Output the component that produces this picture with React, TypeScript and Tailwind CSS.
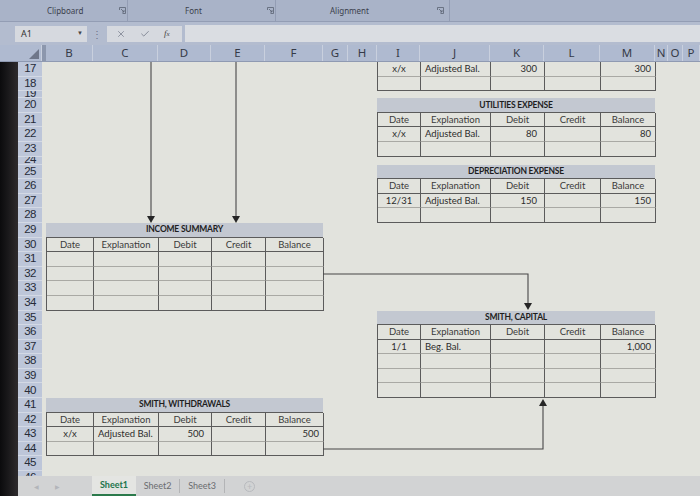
import { X, Check } from "lucide-react";

const COLS = [
  { label: "B", w: "w-[47px]" },
  { label: "C", w: "w-[65px]" },
  { label: "D", w: "w-[53px]" },
  { label: "E", w: "w-[54px]" },
  { label: "F", w: "w-[58px]" },
  { label: "G", w: "w-[25px]" },
  { label: "H", w: "w-[29px]" },
  { label: "I", w: "w-[43px]" },
  { label: "J", w: "w-[70px]" },
  { label: "K", w: "w-[54px]" },
  { label: "L", w: "w-[56px]" },
  { label: "M", w: "w-[55px]" },
  { label: "N", w: "w-[13px]" },
  { label: "O", w: "w-[15px]" },
  { label: "P", w: "flex-1" },
];

// rows 17..46, 19 and 24 are squeezed almost shut
const ROWS = Array.from({ length: 30 }, (_, i) => 17 + i);

function rowHeight(r: number) {
  if (r === 19) return "h-[7px] overflow-hidden";
  if (r === 24) return "h-[8px] overflow-hidden";
  return "h-[14.6px]";
}

const LEFT_COLS = "grid-cols-[47px_65px_53px_54px_58px]";
const RIGHT_COLS = "grid-cols-[43px_70px_54px_56px_55px]";
const HEAD = ["Date", "Explanation", "Debit", "Credit", "Balance"];
const ALIGN = [
  "justify-center",
  "justify-start pl-[4px]",
  "justify-end pr-[7px]",
  "justify-end pr-[7px]",
  "justify-end pr-[4px]",
];
const EMPTY = ["", "", "", "", ""];

type LedgerProps = {
  title?: string;
  rows: string[][];
  cols: string;
  place: string;
  head?: boolean;
};

function Ledger({ title, rows, cols, place, head = true }: LedgerProps) {
  const body = head ? [HEAD, ...rows] : rows;
  return (
    <div className={`${place} flex flex-col`}>
      {title && (
        <div className="h-[14.6px] shrink-0 bg-[#c3c8d1] border-b border-[#5b5b5b] flex items-center justify-center text-[8.5px] font-bold text-[#1e1e1e] tracking-tight">
          {title}
        </div>
      )}
      <div className={`grid ${cols} border-l border-[#5b5b5b]`}>
        {body.map((row, ri) =>
          row.map((cell, ci) => {
            const isHead = head && ri === 0;
            const last = ri === body.length - 1;
            const bottom = isHead || last ? "border-b-[#5b5b5b]" : "border-b-[#a9a9a4]";
            return (
              <div
                key={`${ri}-${ci}`}
                className={`h-[14.6px] flex items-center border-r border-b border-r-[#5b5b5b] ${bottom} text-[9.5px] leading-none whitespace-nowrap ${
                  isHead ? "justify-center text-[#3a3a3a]" : `${ALIGN[ci]} text-[#2c2c2c]`
                }`}
              >
                {cell}
              </div>
            );
          })
        )}
      </div>
    </div>
  );
}

function Launcher() {
  return (
    <svg width="7" height="7" viewBox="0 0 7 7" className="shrink-0">
      <path d="M0.5 3V0.5H6.5V6.5H3.5" stroke="#5b6272" fill="none" strokeWidth="0.8" />
      <path d="M2 2L5 5M5 3V5H3" stroke="#5b6272" fill="none" strokeWidth="0.8" />
    </svg>
  );
}

function Ribbon() {
  return (
    <div className="h-[22px] bg-[#a9b3c8] border-b border-[#939db4] flex items-center text-[8px] text-[#3b404c] font-['Noto_Sans',sans-serif]">
      <div className="w-[128px] h-full flex items-center pl-[47px] border-r border-[#939db4]">
        <span>Clipboard</span>
        <span className="ml-[36px]">
          <Launcher />
        </span>
      </div>
      <div className="w-[148px] h-full flex items-center pl-[57px] border-r border-[#939db4]">
        <span>Font</span>
        <span className="ml-[65px]">
          <Launcher />
        </span>
      </div>
      <div className="w-[174px] h-full flex items-center pl-[54px] border-r border-[#939db4]">
        <span>Alignment</span>
        <span className="ml-[68px]">
          <Launcher />
        </span>
      </div>
      <div className="flex-1" />
    </div>
  );
}

function FormulaBar() {
  return (
    <div className="h-[23px] bg-[#b3bccf] flex items-center font-['Noto_Sans',sans-serif]">
      <div className="ml-[15px] w-[72px] h-[16px] bg-[#d6d9df] flex items-center justify-between pl-[6px] pr-[4px] text-[9px] text-[#333]">
        <span>A1</span>
        <span className="text-[6px] text-[#444]">▼</span>
      </div>
      <div className="w-[20px] flex justify-center text-[10px] leading-none text-[#6b7385]">⋮</div>
      <div className="w-[75px] h-[16px] bg-[#d6d9df] flex items-center pl-[9px] gap-[14px] text-[#6a7080]">
        <X size={10} strokeWidth={1.6} />
        <Check size={10} strokeWidth={1.8} />
        <span className="text-[9px] italic font-['Liberation_Serif',serif] text-[#444]">
          f<span className="text-[7px]">x</span>
        </span>
      </div>
      <div className="ml-[3px] flex-1 h-[17px] bg-[#dadde2]" />
    </div>
  );
}

function ColumnHeaders() {
  return (
    <div className="flex h-[17px] bg-[#afbad0] border-b border-[#8f9ab2] font-['Noto_Sans',sans-serif]">
      <div className="w-[42px] shrink-0 flex items-end justify-end pr-[2px] pb-[2px] border-r border-[#c9d0de]">
        <svg width="10" height="10" viewBox="0 0 10 10">
          <polygon points="10,0 10,10 0,10" fill="#6e7689" />
        </svg>
      </div>
      <div className="w-[4px] shrink-0 bg-[#8c97ad]" />
      {COLS.map((c) => (
        <div
          key={c.label}
          className={`${c.w} shrink-0 border-r border-[#c9d0de] flex items-center justify-center text-[11.5px] leading-none text-[#363b48]`}
        >
          {c.label}
        </div>
      ))}
    </div>
  );
}

function RowHeaders() {
  return (
    <div className="w-[24px] shrink-0 flex flex-col bg-[#bdc6d9] font-['Liberation_Sans',sans-serif]">
      {ROWS.map((r) => (
        <div
          key={r}
          className={`${rowHeight(r)} shrink-0 flex items-center justify-center border-b border-[#d3d9e5] text-[11.5px] leading-none tracking-tighter text-[#262b38]`}
        >
          {r}
        </div>
      ))}
    </div>
  );
}

function SheetBody() {
  return (
    <div className="flex-1 grid grid-cols-[4px_47px_65px_53px_54px_58px_25px_29px_43px_70px_54px_56px_55px_13px_15px_1fr] grid-rows-[14.6px_14.6px_7px_14.6px_14.6px_14.6px_14.6px_8px_repeat(22,14.6px)] bg-[#e2e3dd]">
      <Ledger
        place="col-start-9 col-span-5 row-start-1 row-span-2"
        cols={RIGHT_COLS}
        head={false}
        rows={[["x/x", "Adjusted Bal.", "300", "", "300"], EMPTY]}
      />
      <Ledger
        place="col-start-9 col-span-5 row-start-4 row-span-4"
        cols={RIGHT_COLS}
        title="UTILITIES EXPENSE"
        rows={[["x/x", "Adjusted Bal.", "80", "", "80"], EMPTY]}
      />
      <Ledger
        place="col-start-9 col-span-5 row-start-9 row-span-4"
        cols={RIGHT_COLS}
        title="DEPRECIATION EXPENSE"
        rows={[["12/31", "Adjusted Bal.", "150", "", "150"], EMPTY]}
      />
      <Ledger
        place="col-start-2 col-span-5 row-start-13 row-span-6"
        cols={LEFT_COLS}
        title="INCOME SUMMARY"
        rows={[EMPTY, EMPTY, EMPTY, EMPTY]}
      />
      <Ledger
        place="col-start-9 col-span-5 row-start-19 row-span-6"
        cols={RIGHT_COLS}
        title="SMITH, CAPITAL"
        rows={[["1/1", "Beg. Bal.", "", "", "1,000"], EMPTY, EMPTY, EMPTY]}
      />
      <Ledger
        place="col-start-2 col-span-5 row-start-25 row-span-4"
        cols={LEFT_COLS}
        title="SMITH, WITHDRAWALS"
        rows={[["x/x", "Adjusted Bal.", "500", "", "500"], EMPTY]}
      />
    </div>
  );
}

function SheetTabs() {
  return (
    <div className="h-[20px] bg-[#d2d3d4] flex items-stretch text-[9px] font-['Lato',sans-serif]">
      <div className="w-[74px] flex items-center gap-[16px] pl-[16px] text-[6px] text-[#b3b5ba]">
        <span>◀</span>
        <span>▶</span>
      </div>
      <div className="w-[44px] bg-[#e4e5e2] border-b-2 border-[#2b7a4b] flex items-center justify-center font-bold text-[#21744a]">
        Sheet1
      </div>
      <div className="w-[44px] border-r border-[#b3b4b6] my-[3px] flex items-center justify-center text-[#6a6c70]">
        Sheet2
      </div>
      <div className="w-[45px] border-r border-[#b3b4b6] my-[3px] flex items-center justify-center text-[#6a6c70]">
        Sheet3
      </div>
      <div className="ml-[19px] flex items-center">
        <span className="w-[11px] h-[11px] rounded-full border border-[#b8babe] flex items-center justify-center text-[9px] leading-none text-[#b8babe]">
          +
        </span>
      </div>
    </div>
  );
}

function Connectors() {
  return (
    <svg className="absolute left-0 top-0 pointer-events-none" width="700" height="496">
      <g stroke="#474747" strokeWidth="1.1" fill="none">
        <path d="M151 62V217" />
        <path d="M236 62V217" />
        <path d="M323 274H528V304" />
        <path d="M323 449H543V405" />
      </g>
      <g fill="#262626">
        <polygon points="147,216 155,216 151,223" />
        <polygon points="232,216 240,216 236,223" />
        <polygon points="524,303 532,303 528,310" />
        <polygon points="539,406 547,406 543,399" />
      </g>
    </svg>
  );
}

export default function App() {
  return (
    <div className="relative w-[700px] h-[496px] overflow-hidden bg-[#e2e3dd] font-['Lato',sans-serif]">
      <Ribbon />
      <FormulaBar />
      <ColumnHeaders />
      <div className="flex h-[434px]">
        <div className="w-[18px] shrink-0 bg-gradient-to-r from-[#0b0b0d] to-[#2e2b2d]" />
        <div className="flex-1 flex flex-col">
          <div className="flex h-[414px] overflow-hidden">
            <RowHeaders />
            <SheetBody />
          </div>
          <SheetTabs />
        </div>
      </div>
      <Connectors />
    </div>
  );
}
